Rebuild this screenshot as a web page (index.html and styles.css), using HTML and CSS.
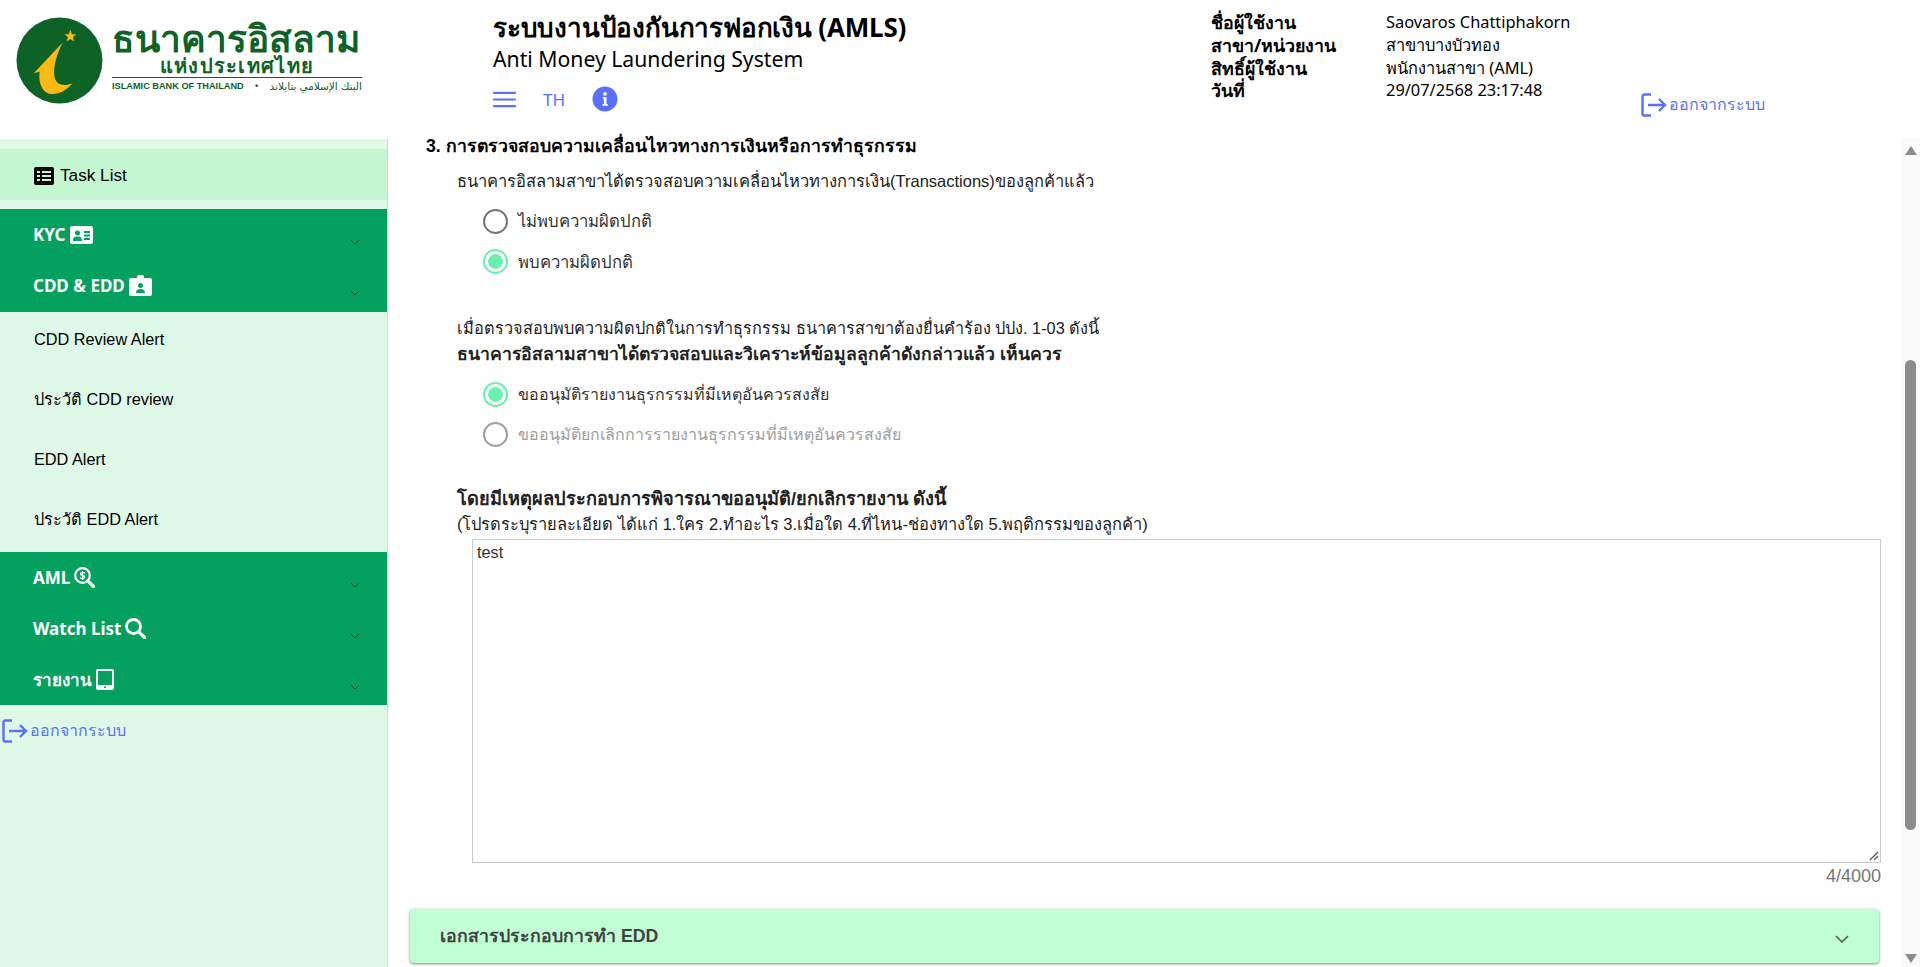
FILE: index.html
```html
<!DOCTYPE html>
<html lang="th">
<head>
    <title>AMLS</title>
    <meta charset="utf-8">
    <meta name="viewport" content="width=device-width, initial-scale=1.0">
    <link rel="stylesheet" href="styles.css">
</head>
<body>
    <header class="topbar">
        <div class="logo">
            <svg class="logo-mark" viewBox="0 0 88 88">
                <circle cx="44" cy="44" r="43.500" fill="#0d6325"/>
                <path d="M47 26 L18 57 L24 55 C22 68 28 78 37 78 C46 78 53 72 57 67 C50 70 41 70 39 61 C37 50 42 36 47 26 Z" fill="#fdb913"/>
                <path d="M55 13 L56.500 17.500 L61 17.500 L57.500 20.300 L58.800 24.800 L55 22.200 L51.200 24.800 L52.500 20.300 L49 17.500 L53.500 17.500 Z" fill="#fdb913"/>
            </svg>
            <div class="logo-text">
                <div class="logo-th">ธนาคารอิสลาม</div>
                <div class="logo-sub">แห่งประเทศไทย</div>
                <div class="logo-en"><span>ISLAMIC BANK OF THAILAND</span><span class="logo-dot">•</span><span class="logo-ar" lang="ar">البنك الإسلامي بتايلاند</span></div>
            </div>
        </div>
        <div class="title">
            <div class="title-th">ระบบงานป้องกันการฟอกเงิน (AMLS)</div>
            <div class="title-en">Anti Money Laundering System</div>
            <div class="tools">
                <svg class="burger" viewBox="0 0 24 18"><path d="M0 2 H24 M0 9 H24 M0 16 H24" stroke="#5b6fff" stroke-width="2.200"/></svg>
                <span class="lang">TH</span>
                <svg class="info" viewBox="0 0 26 26"><circle cx="13" cy="13" r="12.500" fill="#5b6fff"/><circle cx="13" cy="7.800" r="1.900" fill="#fff"/><path d="M10.800 11 H14.500 V18 H15.800 V19.800 H10.500 V18 H11.900 V12.800 H10.800 Z" fill="#fff"/></svg>
            </div>
        </div>
        <dl class="user">
            <dt>ชื่อผู้ใช้งาน</dt><dd>Saovaros Chattiphakorn</dd>
            <dt>สาขา/หน่วยงาน</dt><dd>สาขาบางบัวทอง</dd>
            <dt>สิทธิ์ผู้ใช้งาน</dt><dd>พนักงานสาขา (AML)</dd>
            <dt>วันที่</dt><dd>29/07/2568 23:17:48</dd>
        </dl>
        <a class="logout logout-top">
            <svg viewBox="0 0 26 24"><path d="M10 1.500 H3.500 A2 2 0 0 0 1.500 3.500 V20.500 A2 2 0 0 0 3.500 22.500 H10 M7 12 H24 M18 6 L24 12 L18 18" fill="none" stroke="#5b6fff" stroke-width="2.400"/></svg>
            <span>ออกจากระบบ</span>
        </a>
    </header>

    <div class="page">
        <nav class="sidebar">
            <div class="task-list">
                <svg class="task-icon" viewBox="0 0 20 18"><path fill-rule="evenodd" d="M2 0 H18 A2 2 0 0 1 20 2 V16 A2 2 0 0 1 18 18 H2 A2 2 0 0 1 0 16 V2 A2 2 0 0 1 2 0 Z M3 4 V6 H6 V4 Z M8 4 V6 H17 V4 Z M3 8 V10 H6 V8 Z M8 8 V10 H17 V8 Z M3 12 V14 H6 V12 Z M8 12 V14 H17 V12 Z"/></svg>
                <span>Task List</span>
            </div>
            <div class="group group-a">
                <div class="group-head">
                    <span class="group-name">KYC</span>
                    <svg class="group-icon" width="23" height="18" viewBox="0 0 23 18"><path fill="#fff" fill-rule="evenodd" d="M2 0 H21 A2 2 0 0 1 23 2 V16 A2 2 0 0 1 21 18 H2 A2 2 0 0 1 0 16 V2 A2 2 0 0 1 2 0 Z M7.500 4.500 A2.500 2.500 0 1 0 7.500 9.500 A2.500 2.500 0 1 0 7.500 4.500 Z M3 15 H12 C12 11 10 10.500 7.500 10.500 C5 10.500 3 11 3 15 Z M14 5 V7 H20 V5 Z M14 8.500 V10.500 H20 V8.500 Z M14 12 V14 H20 V12 Z"/></svg>
                    <svg class="chev" viewBox="0 0 10 6"><path d="M1 1 L5 5 L9 1" fill="none" stroke="#0c4a2c" stroke-width="1"/></svg>
                </div>
                <div class="group-head">
                    <span class="group-name">CDD &amp; EDD</span>
                    <svg class="group-icon badge" width="23" height="21" viewBox="0 0 23 21"><path fill="#fff" fill-rule="evenodd" d="M8 3 V2 A3 2 0 0 1 15 2 V3 H21 A2 2 0 0 1 23 5 V19 A2 2 0 0 1 21 21 H2 A2 2 0 0 1 0 19 V5 A2 2 0 0 1 2 3 Z M11.500 8 A2.500 2.500 0 1 0 11.500 13 A2.500 2.500 0 1 0 11.500 8 Z M7 18 H16 C16 15 14 14 11.500 14 C9 14 7 15 7 18 Z"/></svg>
                    <svg class="chev" viewBox="0 0 10 6"><path d="M1 1 L5 5 L9 1" fill="none" stroke="#0c4a2c" stroke-width="1"/></svg>
                </div>
            </div>
            <ul class="sub-menu">
                <li>CDD Review Alert</li>
                <li>ประวัติ CDD review</li>
                <li>EDD Alert</li>
                <li>ประวัติ EDD Alert</li>
            </ul>
            <div class="group group-b">
                <div class="group-head">
                    <span class="group-name">AML</span>
                    <svg class="group-icon" width="21" height="21" viewBox="0 0 21 21"><circle cx="8.500" cy="8.500" r="7.300" fill="none" stroke="#fff" stroke-width="2.200"/><path d="M13.800 13.800 L19.500 19.500" stroke="#fff" stroke-width="3.200" stroke-linecap="round"/><path d="M11 6.300 C10 5 6.500 5 6.500 7 C6.500 9 10.700 8 10.700 10 C10.700 12 7 12 6 10.700 M8.500 4 V13" fill="none" stroke="#fff" stroke-width="1.300"/></svg>
                    <svg class="chev" viewBox="0 0 10 6"><path d="M1 1 L5 5 L9 1" fill="none" stroke="#0c4a2c" stroke-width="1"/></svg>
                </div>
                <div class="group-head">
                    <span class="group-name">Watch List</span>
                    <svg class="group-icon" width="21" height="21" viewBox="0 0 21 21"><circle cx="8.500" cy="8.500" r="7" fill="none" stroke="#fff" stroke-width="2.800"/><path d="M13.800 13.800 L19.500 19.500" stroke="#fff" stroke-width="3.200" stroke-linecap="round"/></svg>
                    <svg class="chev" viewBox="0 0 10 6"><path d="M1 1 L5 5 L9 1" fill="none" stroke="#0c4a2c" stroke-width="1"/></svg>
                </div>
                <div class="group-head">
                    <span class="group-name">รายงาน</span>
                    <svg class="group-icon" width="18" height="21" viewBox="0 0 18 21"><path fill="#fff" fill-rule="evenodd" d="M2 0 H16 A2 2 0 0 1 18 2 V19 A2 2 0 0 1 16 21 H2 A2 2 0 0 1 0 19 V2 A2 2 0 0 1 2 0 Z M2 2 V16 H16 V2 Z M8 17.500 V19 H10 V17.500 Z"/></svg>
                    <svg class="chev" viewBox="0 0 10 6"><path d="M1 1 L5 5 L9 1" fill="none" stroke="#0c4a2c" stroke-width="1"/></svg>
                </div>
            </div>
            <a class="logout logout-side">
                <svg viewBox="0 0 26 24"><path d="M10 1.500 H3.500 A2 2 0 0 0 1.500 3.500 V20.500 A2 2 0 0 0 3.500 22.500 H10 M7 12 H24 M18 6 L24 12 L18 18" fill="none" stroke="#5b6fff" stroke-width="2.400"/></svg>
                <span>ออกจากระบบ</span>
            </a>
        </nav>

        <main class="content">
            <h2 class="section-title">3. การตรวจสอบความเคลื่อนไหวทางการเงินหรือการทำธุรกรรม</h2>
            <div class="body-block">
                <p class="line line-first line-wide">ธนาคารอิสลามสาขาได้ตรวจสอบความเคลื่อนไหวทางการเงิน(Transactions)ของลูกค้าแล้ว</p>
                <div class="radio-list radio-list-big">
                    <div class="radio"><span class="dot"></span>ไม่พบความผิดปกติ</div>
                    <div class="radio radio-on"><span class="dot"></span>พบความผิดปกติ</div>
                </div>
                <p class="line line-gap">เมื่อตรวจสอบพบความผิดปกติในการทำธุรกรรม ธนาคารสาขาต้องยื่นคำร้อง ปปง. 1-03 ดังนี้</p>
                <p class="line line-bold">ธนาคารอิสลามสาขาได้ตรวจสอบและวิเคราะห์ข้อมูลลูกค้าดังกล่าวแล้ว เห็นควร</p>
                <div class="radio-list">
                    <div class="radio radio-on"><span class="dot"></span>ขออนุมัติรายงานธุรกรรมที่มีเหตุอันควรสงสัย</div>
                    <div class="radio radio-off"><span class="dot"></span>ขออนุมัติยกเลิกการรายงานธุรกรรมที่มีเหตุอันควรสงสัย</div>
                </div>
                <p class="line line-bold line-reason">โดยมีเหตุผลประกอบการพิจารณาขออนุมัติ/ยกเลิกรายงาน ดังนี้</p>
                <p class="line line-wide">(โปรดระบุรายละเอียด ได้แก่ 1.ใคร 2.ทำอะไร 3.เมื่อใด 4.ที่ไหน-ช่องทางใด 5.พฤติกรรมของลูกค้า)</p>
                <div class="note">
                    <div class="note-box">test
                        <svg class="grip" viewBox="0 0 10 10"><path d="M1 9 L9 1 M5 9 L9 5" stroke="#555" stroke-width="1.200"/></svg>
                    </div>
                    <div class="counter">4/4000</div>
                </div>
            </div>
            <div class="accordion">
                <span>เอกสารประกอบการทำ EDD</span>
                <svg viewBox="0 0 14 8"><path d="M1 1 L7 7 L13 1" fill="none" stroke="#555" stroke-width="1.500"/></svg>
            </div>
        </main>

        <div class="scroll">
            <span class="arrow-up"></span>
            <span class="thumb"></span>
            <span class="arrow-down"></span>
        </div>
    </div>
</body>
</html>
```

FILE: styles.css
```css
* {
    box-sizing: border-box;
}

html,
body {
    height: 100%;
}

body {
    margin: 0;
    overflow: hidden;
    background-color: #fff;
    color: #000;
    font-family: "Liberation Sans", "Noto Sans", sans-serif;
    font-size: 16px;
}

/* header */

.topbar {
    position: relative;
    display: flex;
    height: 139px;
}

.logo {
    display: flex;
    width: 493px;
    padding: 17px 0 0 16px;
}

.logo-mark {
    width: 87px;
    height: 87px;
}

.logo-text {
    margin-left: 9px;
    width: 250px;
    padding-top: 2px;
    color: #0d6325;
    font-family: "Noto Sans", "Liberation Sans", sans-serif;
}

.logo-th {
    font-size: 37px;
    font-weight: 700;
    line-height: 38px;
    white-space: nowrap;
}

.logo-sub {
    padding-bottom: 3px;
    font-size: 20px;
    font-weight: 700;
    letter-spacing: 1.300px;
    line-height: 17px;
    text-align: center;
    border-bottom: 1px solid #0d6325;
}

.logo-en {
    display: flex;
    align-items: center;
    justify-content: space-between;
    font-family: "Liberation Sans", "DejaVu Sans", sans-serif;
    font-size: 9.200px;
    font-weight: 700;
    line-height: 17px;
    white-space: nowrap;
}

.logo-ar {
    font-size: 10.500px;
    font-weight: 400;
}

.title {
    width: 718px;
    padding-top: 11px;
    font-family: "Noto Sans", "Liberation Sans", sans-serif;
}

.title-th {
    font-size: 26px;
    font-weight: 700;
    letter-spacing: -0.200px;
    line-height: 33px;
}

.title-en {
    font-size: 21.200px;
    line-height: 30px;
}

.tools {
    display: flex;
    align-items: center;
    margin-top: 12px;
}

.burger {
    width: 23px;
    height: 17px;
}

.lang {
    margin-left: 27px;
    color: #5b6fff;
    font-size: 17px;
}

.info {
    width: 26px;
    height: 26px;
    margin-left: 27px;
}

.user {
    display: grid;
    grid-template-columns: 175px auto;
    align-content: start;
    margin: 11px 0 0;
    font-family: "Noto Sans", "Liberation Sans", sans-serif;
    font-size: 16.400px;
    line-height: 22.800px;
}

.user dt {
    font-size: 17.800px;
    font-weight: 700;
}

.user dd {
    margin: 0;
}

.logout {
    display: flex;
    align-items: center;
    color: #5b6fff;
    font-size: 16px;
    font-weight: 400;
}

.logout svg {
    width: 26px;
    height: 24px;
    margin-right: 2px;
}

.logout-top {
    position: absolute;
    left: 1641px;
    top: 92px;
}

/* left menu */

.page {
    display: flex;
    height: 828px;
}

.sidebar {
    flex: none;
    width: 388px;
    padding-top: 10px;
    background-color: #dff9e9;
    border-right: 1px solid #c8dccf;
}

.task-list {
    display: flex;
    align-items: center;
    height: 51px;
    padding: 2px 0 0 34px;
    background-color: #c5f6d2;
    font-size: 17.200px;
}

.task-icon {
    width: 20px;
    height: 18px;
    margin-right: 6px;
}

.group {
    background-color: #04a060;
    color: #fff;
}

.group-a {
    margin-top: 9px;
    height: 103px;
}

.group-b {
    height: 153px;
}

.group-head {
    position: relative;
    display: flex;
    align-items: center;
    height: 51px;
    padding-left: 33px;
    font-family: "Noto Sans", "Liberation Sans", sans-serif;
    font-size: 17px;
    font-weight: 700;
}

.group-icon {
    margin-left: 4px;
}

.chev {
    position: absolute;
    right: 27px;
    top: 30px;
    width: 10px;
    height: 6px;
}

.sub-menu {
    list-style: none;
    margin: 0;
    padding: 2px 0 0 34px;
    height: 240px;
    font-size: 16.300px;
}

.sub-menu li {
    height: 60px;
    line-height: 50px;
}

.logout-side {
    padding: 13px 0 0 2px;
}

/* main form */

.content {
    flex: 1;
    padding: 0 20px 0 22px;
}

.section-title {
    margin: 0;
    padding-left: 16px;
    font-size: 17.700px;
    font-weight: 700;
    line-height: 14px;
}

.body-block {
    padding-left: 47px;
}

.line {
    margin: 0;
    color: #212121;
    font-size: 16.300px;
    line-height: 26px;
}

.line-wide {
    font-size: 16.500px;
}

.line-first {
    margin-top: 15px;
}

.radio-list {
    padding: 7px 0 0 26px;
}

.radio-list-big {
    font-size: 16.700px;
}

.radio {
    display: flex;
    align-items: center;
    height: 40.500px;
    color: #333;
}

.dot {
    width: 25px;
    height: 25px;
    margin-right: 10px;
    border: 2px solid #757575;
    border-radius: 50%;
    background-color: #fff;
}

.radio-on .dot {
    border-color: #69f0ae;
    background: radial-gradient(circle, #69f0ae 0 7px, #fff 7.500px);
}

.radio-off {
    color: #9e9e9e;
}

.radio-off .dot {
    border-color: #9e9e9e;
}

.line-gap {
    margin-top: 33px;
}

.line-bold {
    font-size: 17.600px;
    font-weight: 700;
}

.line-reason {
    margin-top: 33px;
    font-size: 18.200px;
    line-height: 23px;
}

.note {
    padding: 2px 0 0 15px;
}

.note-box {
    position: relative;
    height: 324px;
    padding: 3px 4px;
    border: 1px solid #ccc;
    color: #333;
    font-size: 16.300px;
}

.grip {
    position: absolute;
    right: 1px;
    bottom: 1px;
    width: 10px;
    height: 10px;
}

.counter {
    color: #757575;
    font-size: 18px;
    line-height: 26px;
    text-align: right;
}

.accordion {
    display: flex;
    align-items: center;
    justify-content: space-between;
    height: 54px;
    margin: 20px 2px 0 0;
    padding: 0 30px;
    background-color: #bfffd3;
    border-radius: 4px;
    box-shadow: 0 1px 3px rgba(0, 0, 0, 0.5);
    color: #424242;
    font-size: 17.700px;
    font-weight: 700;
}

.accordion svg {
    width: 14px;
    height: 8px;
    margin-top: 6px;
}

/* scrollbar */

.scroll {
    display: flex;
    flex: none;
    flex-direction: column;
    align-items: center;
    width: 19px;
    background-color: #fafafa;
}

.arrow-up,
.arrow-down {
    width: 0;
    height: 0;
    border-left: 6px solid transparent;
    border-right: 6px solid transparent;
}

.arrow-up {
    margin-top: 7px;
    border-bottom: 9px solid #8c8c8c;
}

.thumb {
    width: 11px;
    height: 470px;
    margin-top: 205px;
    border-radius: 6px;
    background-color: #8c8c8c;
}

.arrow-down {
    margin-top: 124px;
    border-top: 9px solid #8c8c8c;
}
```
